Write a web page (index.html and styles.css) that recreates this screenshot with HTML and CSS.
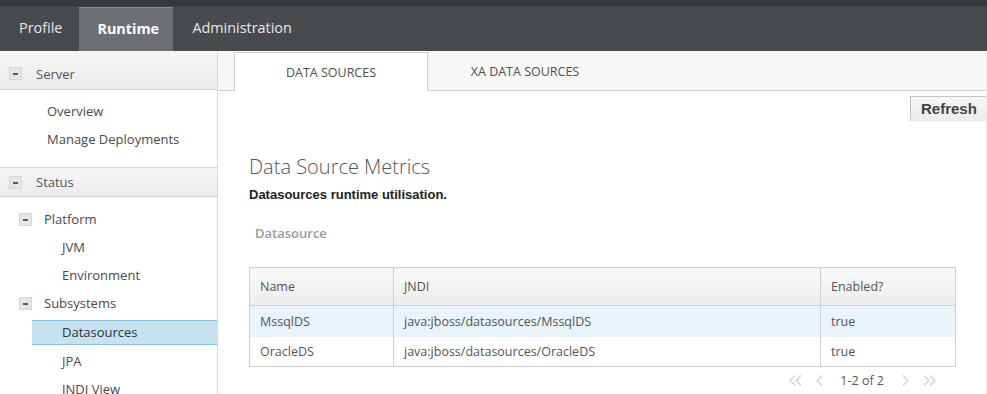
FILE: index.html
```html
<!DOCTYPE html>
<html lang="en">
<head>
    <meta charset="UTF-8">
    <title>Runtime - Data Sources</title>
    <link rel="stylesheet" href="styles.css">
</head>
<body>
    <div class="faixa"></div>
    <div class="menu">
        <div class="aba">Profile</div>
        <div class="aba ativa">Runtime</div>
        <div class="aba">Administration</div>
    </div>
    <div class="corpo">
        <div class="lateral">
            <div class="secao alta"><span class="menos"></span>Server</div>
            <ul class="itens">
                <li>Overview</li>
                <li>Manage Deployments</li>
            </ul>
            <div class="secao"><span class="menos"></span>Status</div>
            <ul class="itens arvore">
                <li class="grupo"><span class="menos"></span>Platform</li>
                <li class="sub">JVM</li>
                <li class="sub">Environment</li>
                <li class="grupo"><span class="menos"></span>Subsystems</li>
                <li class="sub selecionado">Datasources</li>
                <li class="sub">JPA</li>
                <li class="sub">JNDI View</li>
            </ul>
        </div>
        <div class="principal">
            <div class="abas">
                <div class="guia atual">DATA SOURCES</div>
                <div class="guia">XA DATA SOURCES</div>
            </div>
            <div class="barra">
                <div class="btn">Refresh</div>
            </div>
            <div class="conteudo">
                <h2 class="titulo">Data Source Metrics</h2>
                <p class="descricao">Datasources runtime utilisation.</p>
                <h4 class="rotulo">Datasource</h4>
                <table class="tabela">
                    <thead>
                        <tr>
                            <th class="c1">Name</th>
                            <th class="c2">JNDI</th>
                            <th class="c3">Enabled?</th>
                        </tr>
                    </thead>
                    <tbody>
                        <tr class="marcada">
                            <td>MssqlDS</td>
                            <td>java:jboss/datasources/MssqlDS</td>
                            <td>true</td>
                        </tr>
                        <tr>
                            <td>OracleDS</td>
                            <td>java:jboss/datasources/OracleDS</td>
                            <td>true</td>
                        </tr>
                    </tbody>
                </table>
                <div class="paginas">
                    <svg class="seta dupla" width="13" height="11" viewBox="0 0 13 11"><path d="M6 0.5 L1 5.5 L6 10.5 M12 0.5 L7 5.5 L12 10.5" /></svg>
                    <svg class="seta" width="7" height="11" viewBox="0 0 7 11"><path d="M6 0.5 L1 5.5 L6 10.5" /></svg>
                    <span class="contagem">1-2 of 2</span>
                    <svg class="seta" width="7" height="11" viewBox="0 0 7 11"><path d="M1 0.5 L6 5.5 L1 10.5" /></svg>
                    <svg class="seta dupla ultima" width="13" height="11" viewBox="0 0 13 11"><path d="M1 0.5 L6 5.5 L1 10.5 M7 0.5 L12 5.5 L7 10.5" /></svg>
                </div>
            </div>
        </div>
    </div>
</body>
</html>
```

FILE: styles.css
```css
* {
    margin: 0;
    padding: 0;
    box-sizing: border-box;
}

body {
    width: 987px;
    height: 394px;
    overflow: hidden;
    font-family: "Open Sans", "Liberation Sans", sans-serif;
    font-size: 13px;
    color: #4a4a4a;
    background: white;
}

.faixa {
    height: 7px;
    background-color: #353b3d;
    border-bottom: 1px solid #3f4446;
}

.menu {
    display: flex;
    height: 44px;
    background-color: #484b4d;
}

.aba {
    padding: 0 17px 0 19px;
    line-height: 42px;
    font-size: 14.4px;
    color: #e8e8e8;
}

.ativa {
    width: 94px;
    padding-left: 18px;
    font-weight: bold;
    color: white;
    background-color: #6d7072;
    border-top: 1px solid #85888a;
    line-height: 41px;
}

.corpo {
    display: flex;
}

.lateral {
    width: 218px;
    height: 343px;
    border-right: 1px solid #d8d8d8;
}

.secao {
    display: flex;
    align-items: center;
    height: 30px;
    padding-left: 9px;
    background: linear-gradient(#f7f7f7, #ebebeb);
    border-top: 1px solid #d6d6d6;
    border-bottom: 1px solid #d0d0d0;
    color: #555;
}

.secao.alta {
    height: 39px;
    padding-top: 7px;
    border-top: none;
}

.secao .menos {
    margin-right: 14px;
}

.menos {
    display: inline-block;
    position: relative;
    width: 13px;
    height: 13px;
    background-color: #e6e6e6;
    border: 1px solid #d6d6d6;
}

.menos::after {
    content: "";
    position: absolute;
    left: 3px;
    top: 5px;
    width: 5px;
    height: 2px;
    background-color: #5a5a5a;
}

.itens {
    list-style-type: none;
    padding: 7px 0 14px 0;
}

.itens li {
    height: 28px;
    line-height: 28px;
    padding-left: 47px;
    color: #4a4a4a;
}

.arvore {
    padding: 8px 0 0 0;
}

.arvore .grupo {
    display: flex;
    align-items: center;
    padding-left: 19px;
}

.grupo .menos {
    margin-right: 12px;
}

.arvore .sub {
    padding-left: 62px;
}

.arvore .selecionado {
    height: 25px;
    line-height: 23px;
    margin: 3px 0 2px 32px;
    padding-left: 30px;
    background-color: #c6e1f0;
    border-top: 1px solid #86c2e2;
    border-bottom: 1px solid #86c2e2;
    color: #333;
}

.principal {
    flex: 1;
    border-right: 1px solid #ececec;
}

.abas {
    display: flex;
    align-items: flex-end;
    height: 40px;
    padding-left: 16px;
    background-color: #f7f7f7;
    border-bottom: 1px solid #cfcfcf;
}

.guia {
    width: 194px;
    height: 38px;
    line-height: 40px;
    text-align: center;
    font-size: 12.5px;
    color: #505050;
}

.guia.atual {
    height: 39px;
    margin-bottom: -1px;
    background-color: white;
    border: 1px solid #cfcfcf;
    border-bottom: none;
    line-height: 40px;
}

.barra {
    display: flex;
    justify-content: flex-end;
    padding-top: 5px;
}

.btn {
    width: 76px;
    height: 25px;
    padding-left: 10px;
    line-height: 24px;
    font-family: "Liberation Sans", Arial, sans-serif;
    font-size: 15px;
    font-weight: bold;
    color: #444;
    background: linear-gradient(#f6f6f6, #ebebeb);
    border-top: 1px solid #c4c4c4;
    border-left: 1px solid #c4c4c4;
}

.conteudo {
    padding: 32px 30px 0 31px;
}

.titulo {
    font-size: 20px;
    font-weight: 300;
    color: #555;
    line-height: 28px;
}

.descricao {
    margin-top: 6px;
    font-family: "Liberation Sans", Arial, sans-serif;
    font-size: 13px;
    font-weight: bold;
    color: #222;
    line-height: 16px;
}

.rotulo {
    margin: 20px 0 0 6px;
    font-size: 13px;
    font-weight: 600;
    color: #9a9a9a;
    line-height: 20px;
}

.tabela {
    width: 707px;
    margin-top: 24px;
    border-collapse: collapse;
    border: 1px solid #cfcfcf;
    font-size: 12.5px;
    color: #555;
}

.tabela th {
    height: 38px;
    padding-left: 10px;
    text-align: left;
    font-weight: normal;
    background: linear-gradient(#fafafa, #ececec);
    border-left: 1px solid #cfcfcf;
    border-bottom: 1px solid #cfcfcf;
}

.tabela td {
    height: 30px;
    padding-left: 10px;
    border-left: 1px solid #cfcfcf;
}

.tabela .marcada td {
    height: 31px;
    background-color: #e8f3fa;
}

.c1 {
    width: 144px;
}

.c2 {
    width: 427px;
}

.paginas {
    display: flex;
    justify-content: flex-end;
    align-items: center;
    width: 687px;
    height: 26px;
    color: #555;
}

.seta {
    fill: none;
    stroke: #cfcfcf;
    stroke-width: 1.2;
}

.dupla {
    margin: 0 14px 0 14px;
}

.dupla.ultima {
    margin-right: 0;
}

.contagem {
    margin: 0 18px 0 17px;
    font-size: 12.5px;
}
```
